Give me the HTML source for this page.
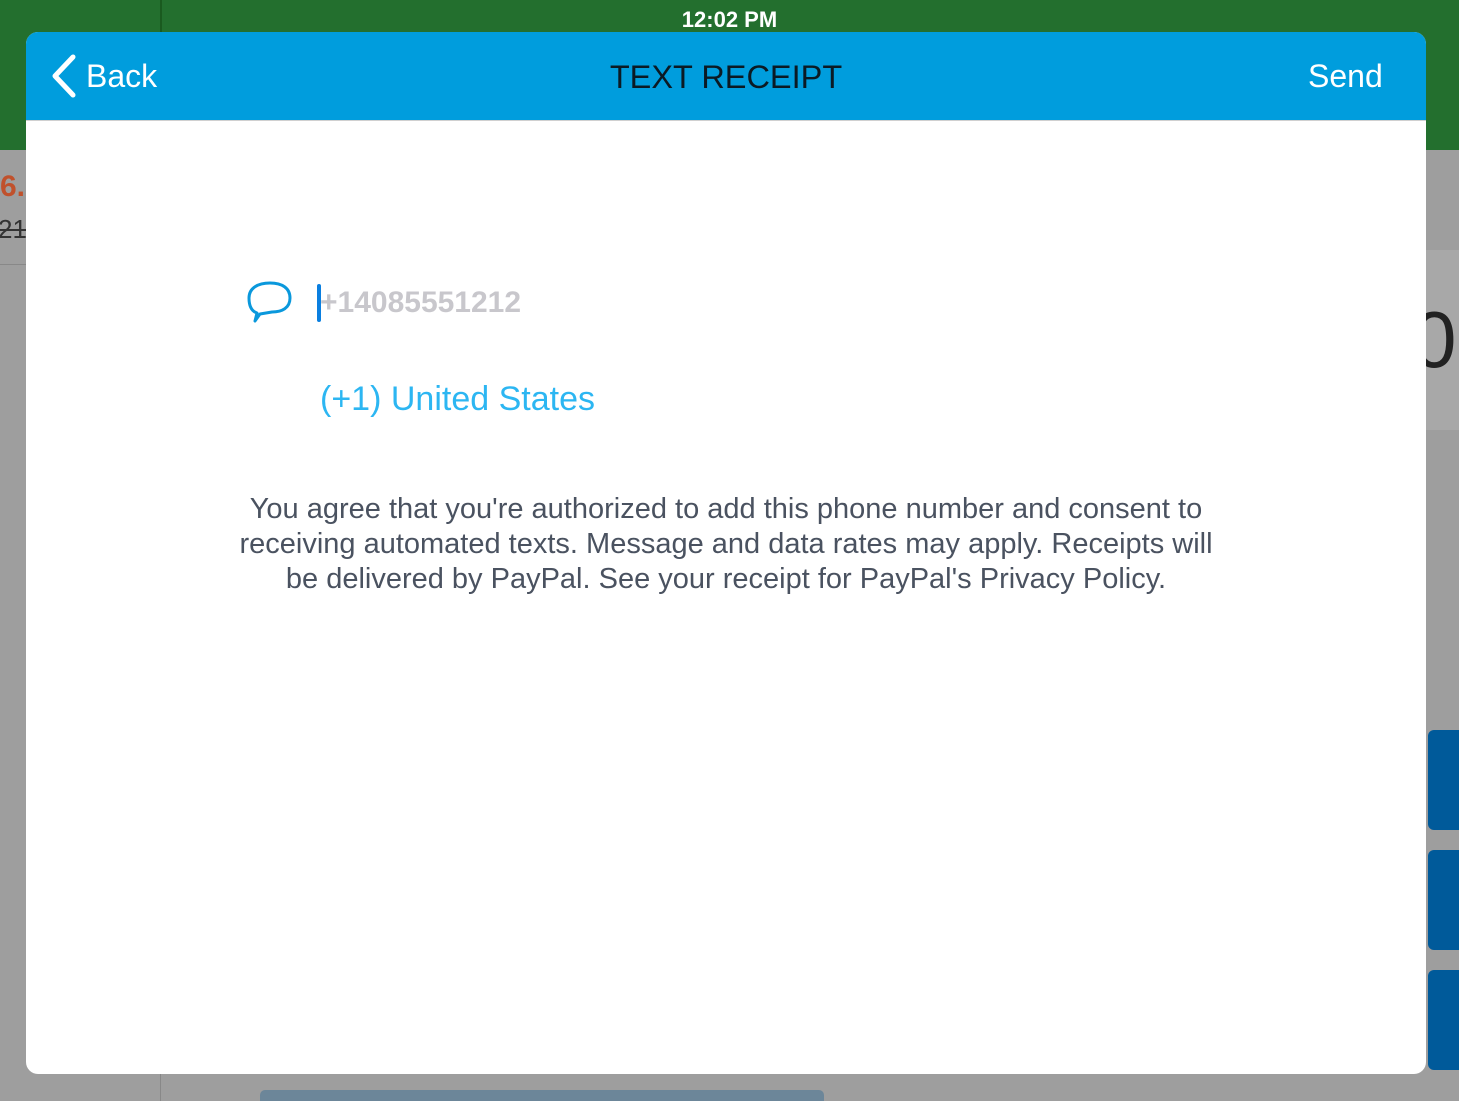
<!DOCTYPE html>
<html><head><meta charset="utf-8"><style>
*{margin:0;padding:0;box-sizing:border-box}
html,body{width:1459px;height:1101px;overflow:hidden}
body{position:relative;background:#9e9e9e;font-family:"Liberation Sans",sans-serif}
.abs{position:absolute}
</style></head><body>
<div class="abs" style="left:0;top:0;width:1459px;height:150px;background:#236f2e"></div>
<div class="abs" style="left:160px;top:0;width:2px;height:32px;background:#1a5a1f"></div>
<div class="abs" style="left:0;top:0;width:1459px;height:32px;text-align:center;color:#fff;font-size:22px;line-height:40px;font-weight:bold">12:02 PM</div>
<div class="abs" style="left:1420px;top:250px;width:39px;height:180px;background:#a8a8a8"></div>
<div class="abs" style="left:1412px;top:290px;font-size:80px;color:#222;line-height:100px">00</div>
<div class="abs" style="left:0;top:170px;font-size:30px;color:#c0512c;font-weight:bold">6.</div>
<div class="abs" style="left:-2px;top:214px;font-size:26px;color:#333;text-decoration:line-through">21</div>
<div class="abs" style="left:0;top:264px;width:26px;height:1px;background:#888"></div>
<div class="abs" style="left:160px;top:1074px;width:1px;height:27px;background:#888"></div>
<div class="abs" style="left:260px;top:1090px;width:564px;height:11px;background:#6c8699;border-radius:5px 5px 0 0"></div>
<div class="abs" style="left:1428px;top:730px;width:40px;height:100px;background:#005a9a;border-radius:6px"></div>
<div class="abs" style="left:1428px;top:850px;width:40px;height:100px;background:#005a9a;border-radius:6px"></div>
<div class="abs" style="left:1428px;top:970px;width:40px;height:100px;background:#005a9a;border-radius:6px"></div>

<div class="abs" style="left:26px;top:32px;width:1400px;height:1042px;background:#fff;border-radius:12px;overflow:hidden">
  <div class="abs" style="left:0;top:0;width:1400px;height:89px;background:#009ddd;border-bottom:1px solid #d0d0d0"></div>
  <svg class="abs" style="left:24px;top:22px" width="28" height="44" viewBox="0 0 28 44"><path d="M23 3 L5 22 L23 41" fill="none" stroke="#fff" stroke-width="5" stroke-linecap="round" stroke-linejoin="round"/></svg>
  <div class="abs" style="left:60px;top:24px;font-size:32px;color:#fff;line-height:40px">Back</div>
  <div class="abs" style="left:0;top:24px;width:1400px;text-align:center;font-size:32.5px;color:#0b1a24;line-height:42px">TEXT RECEIPT</div>
  <div class="abs" style="left:1282px;top:24px;font-size:32px;color:#fff;line-height:40px">Send</div>

  <svg class="abs" style="left:220px;top:248px" width="48" height="46" viewBox="0 0 48 46"><path d="M24 3 C36 3 44 8 44 18 C44 28 36 32 26 32 L14 34 L9 41 L11 33 C5 31 3 25 3 18 C3 8 12 3 24 3 Z" fill="none" stroke="#0a98dc" stroke-width="3" stroke-linejoin="round"/></svg>
  <div class="abs" style="left:291px;top:252px;width:4px;height:38px;background:#0a7fe0;border-radius:2px"></div>
  <div class="abs" style="left:294px;top:253px;font-size:30px;font-weight:bold;color:#c8c7cc;line-height:36px">+14085551212</div>
  <div class="abs" style="left:294px;top:347px;font-size:34px;color:#2cb6f2;line-height:40px">(+1) United States</div>
  <div class="abs" style="left:100px;top:460px;width:1200px;text-align:center;font-size:29px;line-height:35px;color:#4a5260">You agree that you're authorized to add this phone number and consent to<br>receiving automated texts. Message and data rates may apply. Receipts will<br>be delivered by PayPal. See your receipt for PayPal's Privacy Policy.</div>
</div>
</body></html>
